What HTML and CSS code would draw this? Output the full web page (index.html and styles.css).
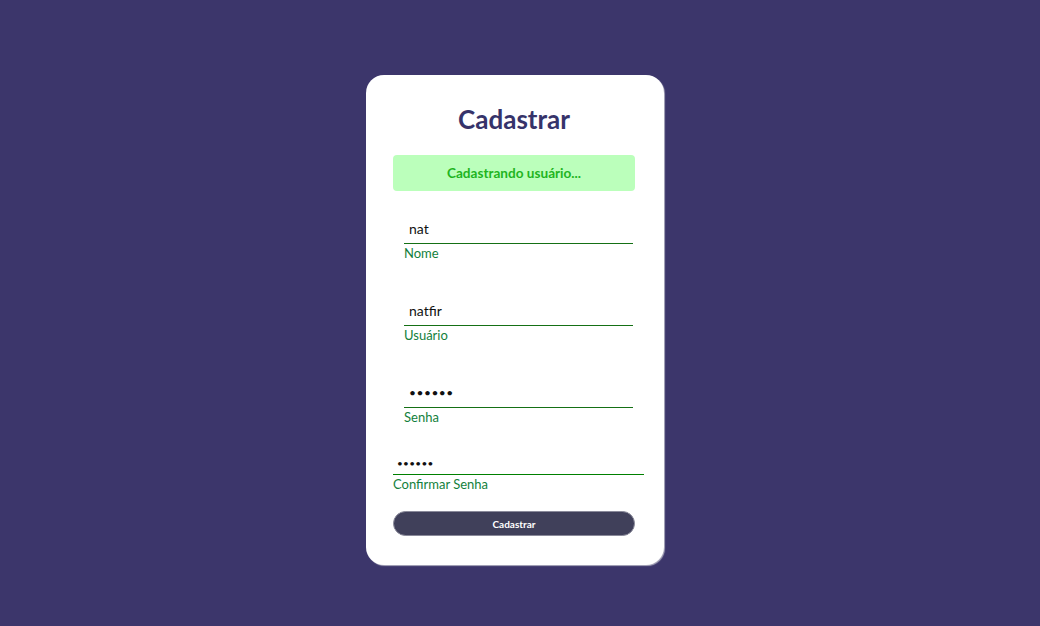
FILE: index.html
```html
<!DOCTYPE html>
<html lang="pt-BR">
<head>
<meta charset="utf-8">
<title>Cadastrar</title>
<link rel="stylesheet" href="styles.css">
</head>
<body>
<main class="page">
  <form class="card">
    <h1 class="title">Cadastrar</h1>
    <div class="msg">Cadastrando usuário...</div>
    <div class="field">
      <input class="input" type="text" value="nat">
      <label class="label">Nome</label>
    </div>
    <div class="field">
      <input class="input" type="text" value="natfir">
      <label class="label">Usuário</label>
    </div>
    <div class="field">
      <input class="input input-pass" type="password" value="123456">
      <label class="label">Senha</label>
    </div>
    <div class="field-wide">
      <input class="input input-pass-small" type="password" value="123456">
      <label class="label">Confirmar Senha</label>
    </div>
    <button class="btn" type="button">Cadastrar</button>
  </form>
</main>
</body>
</html>
```
FILE: styles.css
```css
html, body {
  margin: 0;
  padding: 0;
  height: 100%;
}
body {
  background: #3c366b;
  font-family: "Lato", "Open Sans", sans-serif;
}
.page {
  display: flex;
  justify-content: center;
  padding-top: 75px;
  padding-right: 10px;
}
.card {
  width: 298px;
  box-sizing: border-box;
  background: #ffffff;
  border-radius: 18px;
  padding: 28px 29px 29px 27px;
  display: flex;
  flex-direction: column;
  box-shadow: 1px 1px 1px rgba(200, 200, 210, 0.8);
}
.title {
  margin: 0;
  font-size: 26px;
  line-height: 32px;
  font-weight: 700;
  text-align: center;
  color: #36336a;
}
.msg {
  margin-top: 20px;
  height: 36px;
  line-height: 36px;
  background: #bbffbb;
  border-radius: 4px;
  color: #1fb51f;
  font-weight: 700;
  font-size: 13.6px;
  text-align: center;
}
.field {
  margin: 23px 2px 11px 11px;
  display: flex;
  flex-direction: column;
}
.field + .field {
  margin-top: 23px;
}
.field-wide {
  margin-top: 14px;
  display: flex;
  flex-direction: column;
  margin-right: -9px;
}
.input {
  height: 30px;
  box-sizing: border-box;
  border: none;
  border-bottom: 1px solid #157015;
  outline: none;
  padding: 0 5px;
  font-family: inherit;
  font-size: 14px;
  color: #111;
  background: transparent;
}
.input-pass {
  font-size: 12px;
  letter-spacing: 0.5px;
}
.input-pass-small {
  height: 24px;
  padding: 0 4px;
  font-size: 10px;
  letter-spacing: 0.3px;
  border-bottom-color: #008000;
}
.label {
  line-height: 18px;
  font-size: 13px;
  color: #137f3c;
}
.btn {
  margin-top: 18px;
  height: 25px;
  border-radius: 13px;
  border: 1px solid #8a8a9a;
  background: #40405a;
  color: #ffffff;
  font-family: inherit;
  font-weight: 700;
  font-size: 10px;
  padding: 0;
}
```
